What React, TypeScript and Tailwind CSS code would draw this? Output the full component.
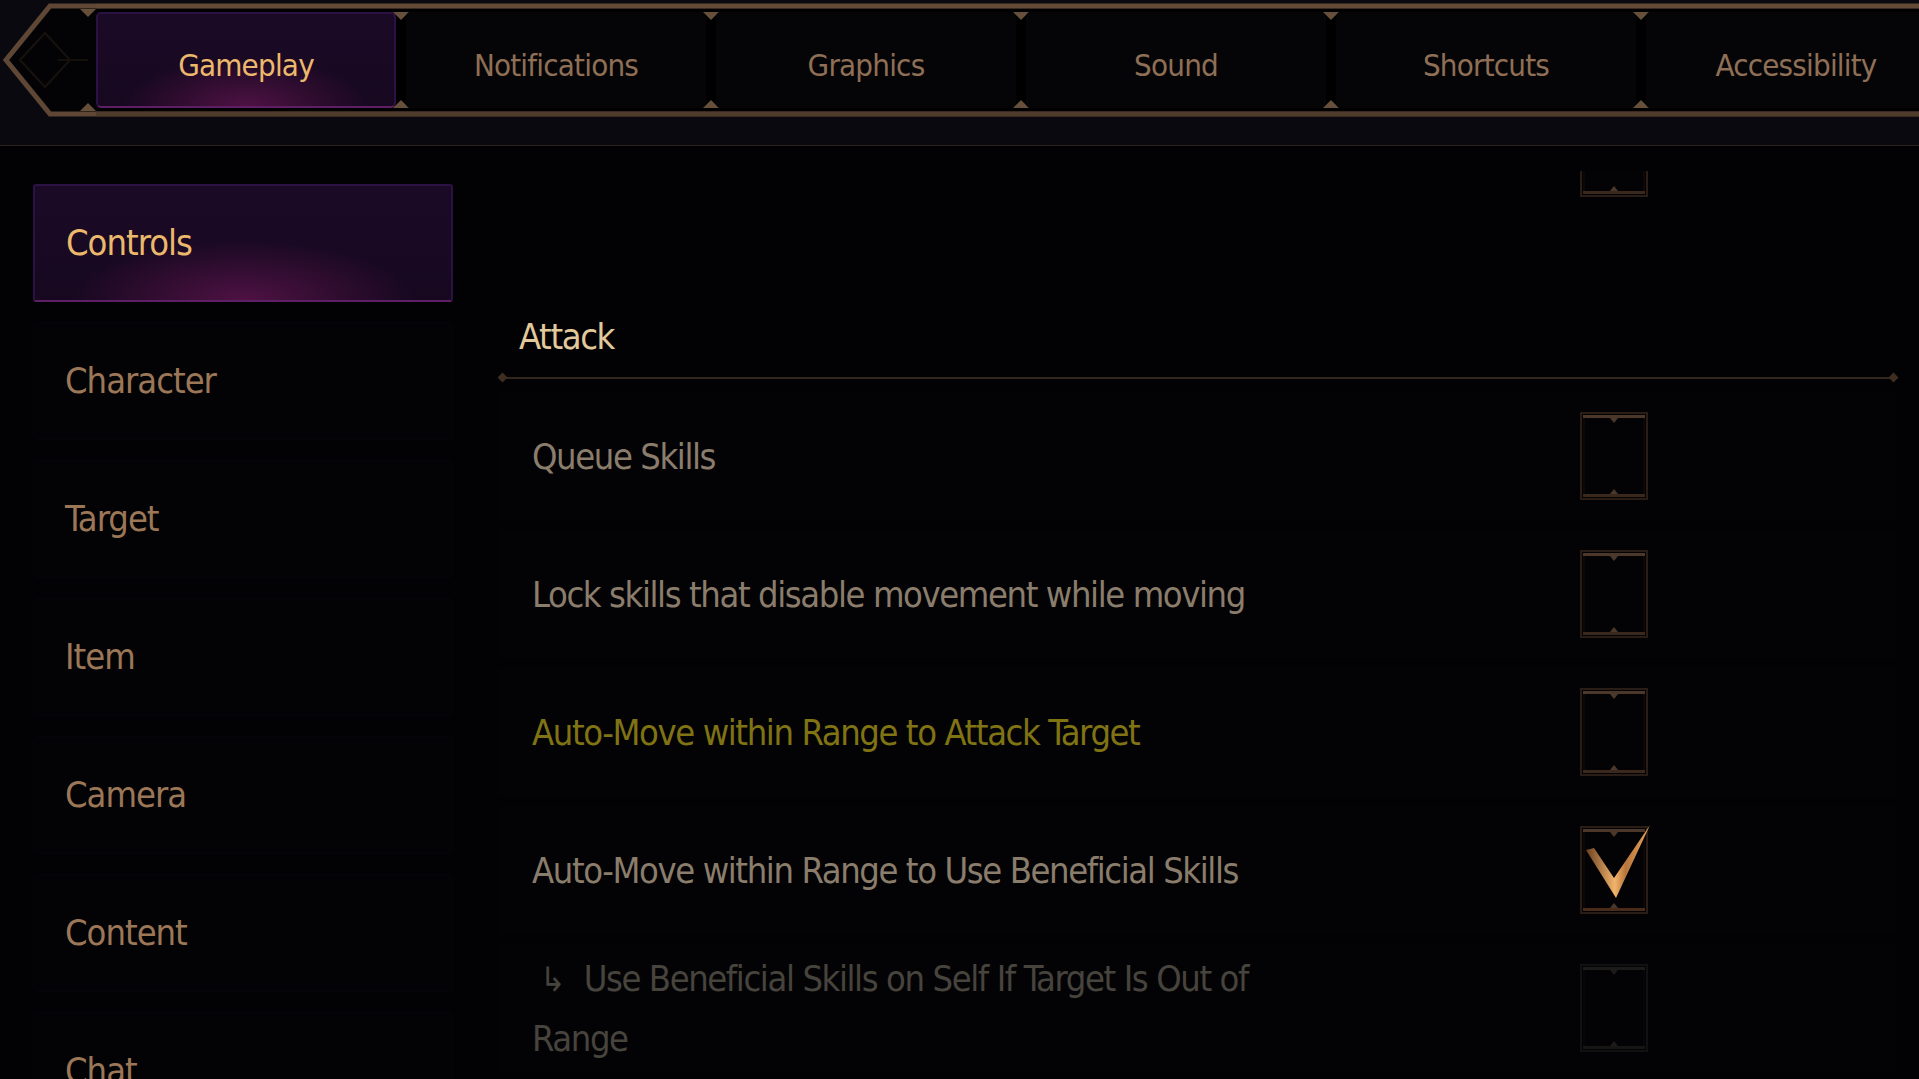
import React from 'react';

const tabs = ['Gameplay', 'Notifications', 'Graphics', 'Sound', 'Shortcuts', 'Accessibility'];
const sideItems = ['Controls', 'Character', 'Target', 'Item', 'Camera', 'Content', 'Chat'];

type Row = { label: string; checked?: boolean; highlight?: boolean };

const rows: Row[] = [
  { label: 'Queue Skills' },
  { label: 'Lock skills that disable movement while moving' },
  { label: 'Auto-Move within Range to Attack Target', highlight: true },
  { label: 'Auto-Move within Range to Use Beneficial Skills', checked: true },
];

const activeBg =
  'bg-[radial-gradient(ellipse_55%_70%_at_50%_100%,rgba(115,24,90,0.6),transparent_75%),linear-gradient(to_bottom,#1b0a26,#170820)]';

const CheckBox = ({ checked = false, dim = false }: { checked?: boolean; dim?: boolean }) => {
  const frame = dim ? '#121111' : '#2a1d15';
  const bar = dim ? '#1c1b1a' : '#4c382a';
  const bottom = dim ? '#171615' : checked ? '#4a2a19' : '#3a281d';
  return (
    <svg width="68" height="88" viewBox="0 0 68 88" className="shrink-0 overflow-visible">
      <defs>
        <linearGradient id="chk" x1="0" y1="0" x2="1" y2="0">
          <stop offset="0%" stopColor="#6a3f1f" />
          <stop offset="45%" stopColor="#f1b46c" />
          <stop offset="62%" stopColor="#b8753a" />
          <stop offset="100%" stopColor="#e6a763" />
        </linearGradient>
      </defs>
      <rect x="1" y="1" width="66" height="86" fill="#030305" stroke={frame} strokeWidth="2" />
      <rect x="4" y="4" width="60" height="80" fill="none" stroke={dim ? '#0b0b0b' : '#140e0a'} strokeWidth="1" />
      <rect x="3" y="3" width="62" height="3" fill={bar} />
      <rect x="3" y="82" width="62" height="3" fill={bottom} />
      <polygon points="30,6 38,6 34,11" fill={bar} />
      <polygon points="30,82 38,82 34,77" fill={bar} />
      {checked && <polygon points="6,24 14,22 34,52 70,-1 36,72" fill="url(#chk)" />}
    </svg>
  );
};

const Notch = () => (
  <div className="flex w-[10px] shrink-0 flex-col items-center justify-between">
    <svg width="16" height="8" viewBox="0 0 16 8" className="-mx-[3px]">
      <polygon points="0,0 16,0 8,8" fill="#66503c" />
    </svg>
    <svg width="16" height="8" viewBox="0 0 16 8" className="-mx-[3px]">
      <polygon points="0,8 16,8 8,0" fill="#66503c" />
    </svg>
  </div>
);

const Diamond = () => <div className="h-[7px] w-[7px] shrink-0 rotate-45 bg-[#3e2e22]" />;

export default function App() {
  return (
    <div className="flex h-[1079px] w-[1919px] flex-col overflow-hidden bg-[#020204] font-['Liberation_Sans_Narrow','DejaVu_Sans_Condensed','Liberation_Sans',sans-serif]">
      {/* top tab bar */}
      <div className="h-[146px] shrink-0 border-b border-[#2e2119] bg-[#09090f]">
        <div className="flex h-[118px]">
          <svg width="96" height="118" viewBox="0 0 96 118" className="shrink-0">
            <polygon points="50,5 96,5 96,115 50,115 6,60" fill="#030305" />
            <polygon points="20,60 45,33 70,60 45,87" fill="none" stroke="#17120e" strokeWidth="2" />
            <line x1="58" y1="60" x2="88" y2="60" stroke="#15100c" strokeWidth="2" />
            <polyline points="96,6 50,6 6,60 50,114 96,114" fill="none" stroke="#5e4735" strokeWidth="5" />
            <polygon points="80,9 96,9 88,17" fill="#66503c" />
            <polygon points="80,111 96,111 88,103" fill="#66503c" />
          </svg>
          <div className="flex min-w-0 flex-1 flex-col overflow-hidden pt-[3px]">
            <div className="h-[6px] shrink-0 border-y border-[#3a2a1f] bg-[#634b38]" />
            <div className="flex h-[102px] shrink-0 bg-black py-[3px]">
              {tabs.map((t, i) => (
                <React.Fragment key={t}>
                  {i > 0 && <Notch />}
                  <div
                    className={
                      'flex w-[300px] shrink-0 items-center justify-center rounded-[5px] pt-[10px] text-[31px] tracking-[-0.8px] ' +
                      (i === 0
                        ? activeBg + ' border-2 border-[#2c1244] border-b-[#5e1f66] text-[#ecb96c]'
                        : 'bg-[#050508] text-[#8f6f55]')
                    }
                  >
                    {t}
                  </div>
                </React.Fragment>
              ))}
            </div>
            <div className="h-[6px] shrink-0 border-y border-[#3a2a1f] bg-[#4e3b2c]" />
          </div>
        </div>
      </div>

      <div className="flex min-h-0 flex-1">
        {/* sidebar */}
        <div className="flex w-[460px] shrink-0 flex-col gap-[20px] pl-[33px] pr-[7px] pt-[38px]">
          {sideItems.map((s, i) => (
            <div
              key={s}
              className={
                'flex h-[118px] shrink-0 items-center rounded-[3px] pl-[31px] text-[36px] tracking-[-1px] ' +
                (i === 0
                  ? activeBg + ' border-2 border-[#2c1244] border-b-[#5e1f66] text-[#ecb96c]'
                  : 'border border-[#050509] bg-[#030306] text-[#9c7757]')
              }
            >
              {s}
            </div>
          ))}
        </div>

        {/* settings list */}
        <div className="flex min-w-0 flex-1 flex-col pl-[39px] pr-[22px] pt-[25px]">
          <div className="flex h-[26px] shrink-0 items-end overflow-hidden pl-[1081px]">
            <CheckBox />
          </div>

          <div className="mt-[116px] pl-[20px] text-[36px] leading-[48px] tracking-[-1.4px] text-[#e2c99b]">Attack</div>

          <div className="mt-[15px] flex h-[3px] items-center">
            <Diamond />
            <div className="h-[2px] flex-1 bg-[#33261c]" />
            <Diamond />
          </div>

          <div className="mt-[13px] flex flex-col gap-[10px]">
            {rows.map((r) => (
              <div key={r.label} className="flex h-[128px] shrink-0 items-center bg-[#030306] pl-[33px]">
                <div
                  className={
                    'w-[1048px] shrink-0 text-[36px] leading-[59px] tracking-[-1.4px] ' +
                    (r.highlight ? 'text-[#807314]' : 'text-[#8b7d6b]')
                  }
                >
                  {r.label}
                </div>
                <CheckBox checked={r.checked} />
              </div>
            ))}
            <div className="flex h-[128px] shrink-0 items-center bg-[#030305] pl-[33px]">
              <div className="w-[1048px] shrink-0 text-[36px] leading-[59px] tracking-[-1.4px] text-[#47433d]">
                <div className="whitespace-nowrap pl-[8px]">
                  <span className="mr-[18px] inline-block text-[34px] tracking-normal">↳</span>Use Beneficial Skills on Self If Target Is Out of
                </div>
                <div>Range</div>
              </div>
              <CheckBox dim />
            </div>
          </div>
        </div>
      </div>
    </div>
  );
}
